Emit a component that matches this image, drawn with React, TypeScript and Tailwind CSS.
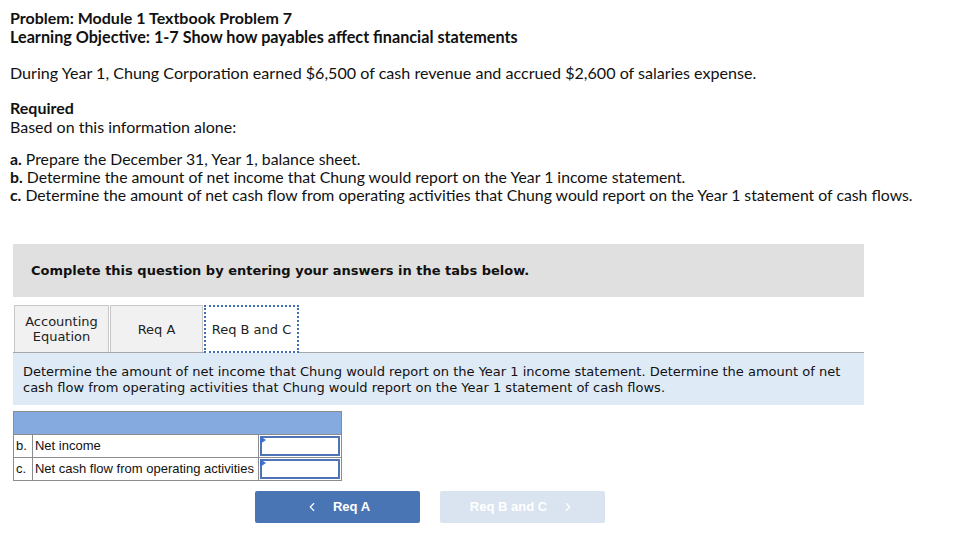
import { ChevronLeft, ChevronRight } from 'lucide-react';

const proxima = { fontFamily: 'Lato, "Open Sans", sans-serif' };

function Tab({ label, width, active }: { label: React.ReactNode; width: string; active?: boolean }) {
    if (active) {
        return (
            <div className={`-mb-px flex h-[48px] ${width} items-center justify-center border-2 border-dotted border-[#3f6fb5] bg-white text-[13px] leading-[15px] text-[#222]`}>
                {label}
            </div>
        );
    }
    return (
        <div className={`flex h-[47px] ${width} items-center justify-center border border-b-0 border-[#c8c8c8] bg-[#f1f1f1] text-center text-[13px] leading-[15px] text-[#222]`}>
            {label}
        </div>
    );
}

function AnswerCell() {
    return (
        <div className="relative h-[22px] w-[83px] border-l border-[#8c8c8c] bg-white p-[1px]">
            <div className="h-full w-full border-2 border-[#4f74b5]" />
            <div className="absolute left-[1px] top-[1px] h-0 w-0 border-y-[4px] border-l-[6px] border-y-transparent border-l-[#3f6fcf]" />
        </div>
    );
}

export default function App() {
    return (
        <div className="min-h-[556px] w-[954px] bg-white text-[#111]">
            <div className="px-[10px] pt-[8px] text-[16px] leading-[19px]" style={proxima}>
                <div className="font-bold">Problem: Module 1 Textbook Problem 7</div>
                <div className="text-[16.2px] font-bold">Learning Objective: 1-7 Show how payables affect financial statements</div>

                <p className="mt-[17px] text-[16.1px]">
                    During Year 1, Chung Corporation earned $6,500 of cash revenue and accrued $2,600 of salaries expense.
                </p>

                <div className="mt-[16px] font-bold">Required</div>
                <div>Based on this information alone:</div>

                <div className="mt-[14px] text-[15.8px] leading-[18px]">
                    <div><span className="font-bold">a.</span> Prepare the December 31, Year 1, balance sheet.</div>
                    <div><span className="font-bold">b.</span> Determine the amount of net income that Chung would report on the Year 1 income statement.</div>
                    <div><span className="font-bold">c.</span> Determine the amount of net cash flow from operating activities that Chung would report on the Year 1 statement of cash flows.</div>
                </div>
            </div>

            <div className="ml-[13px] mt-[40px] w-[851px]" style={{ fontFamily: '"DejaVu Sans", Verdana, sans-serif' }}>
                <div className="flex h-[53px] items-center bg-[#e0e0e0] pl-[18px] text-[13px] font-bold text-[#111]">
                    Complete this question by entering your answers in the tabs below.
                </div>

                <div className="mt-[8px] flex items-end gap-[1px] border-b border-[#a8a8a8] pl-[1px]">
                    <Tab label={<>Accounting<br />Equation</>} width="w-[95px]" />
                    <Tab label="Req A" width="w-[93px]" />
                    <Tab label="Req B and C" width="w-[95px]" active />
                </div>

                <div className="bg-[#dfeaf7] px-[10px] pb-[9px] pt-[11px] text-[13px] leading-[16px] text-[#111]">
                    Determine the amount of net income that Chung would report on the Year 1 income statement. Determine the amount of net cash flow from operating activities that Chung would report on the Year 1 statement of cash flows.
                </div>

                <div className="mt-[6px] w-[329px] border border-[#8c8c8c] text-[13px] text-[#111]" style={{ fontFamily: '"Liberation Sans", Arial, sans-serif' }}>
                    <div className="h-[22px] bg-[#84aadf]" />
                    <div className="flex border-t border-[#8c8c8c]">
                        <div className="flex w-[19px] items-center border-r border-[#8c8c8c] pl-[2px]">b.</div>
                        <div className="flex w-[226px] items-center pl-[2px]">Net income</div>
                        <AnswerCell />
                    </div>
                    <div className="flex border-t border-[#8c8c8c]">
                        <div className="flex w-[19px] items-center border-r border-[#8c8c8c] pl-[2px]">c.</div>
                        <div className="flex w-[226px] items-center pl-[2px]">Net cash flow from operating activities</div>
                        <AnswerCell />
                    </div>
                </div>

                <div className="ml-[242px] mt-[10px] flex gap-[20px] text-[13px] font-bold text-white" style={{ fontFamily: '"Liberation Sans", Arial, sans-serif' }}>
                    <div className="flex h-[32px] w-[165px] items-center justify-center gap-[14px] rounded-[2px] bg-[#4a75b4]">
                        <ChevronLeft size={14} strokeWidth={2} />
                        <span>Req A</span>
                    </div>
                    <div className="flex h-[32px] w-[165px] items-center justify-center gap-[14px] rounded-[2px] bg-[#d9e4f0]">
                        <span>Req B and C</span>
                        <ChevronRight size={14} strokeWidth={2} />
                    </div>
                </div>
            </div>
        </div>
    );
}
